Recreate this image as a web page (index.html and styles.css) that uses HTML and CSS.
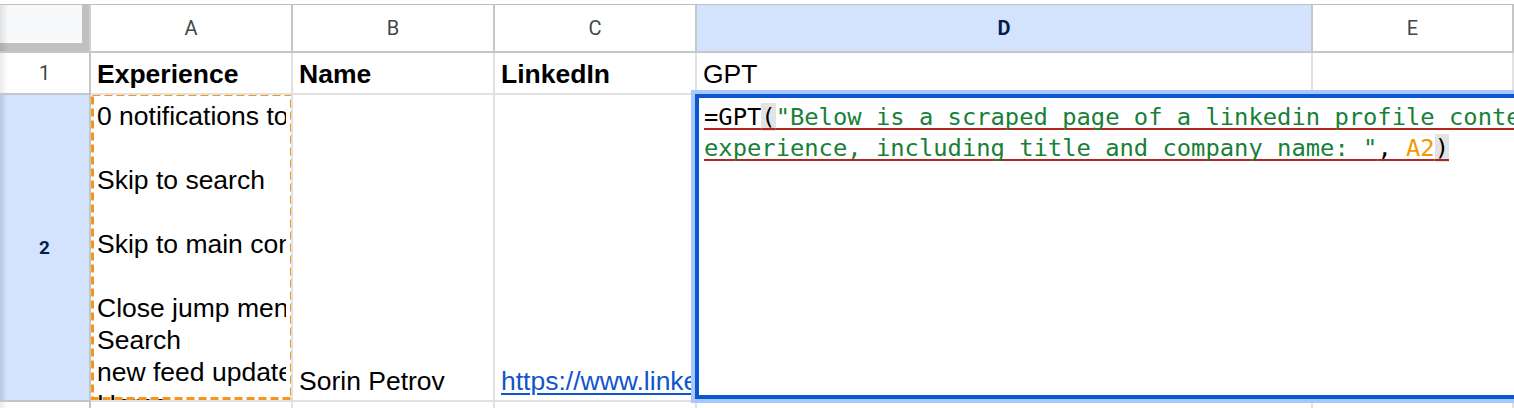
FILE: index.html
```html
<!DOCTYPE html>
<html lang="en">
<head>
<meta charset="utf-8">
<title>Sheet</title>
<link rel="stylesheet" href="styles.css">
</head>
<body>
<div class="sheet">
  <div class="strip"></div>
  <div class="grid">
    <div class="corner"><div class="corner-inner"></div></div>
    <div class="colhead">A</div>
    <div class="colhead">B</div>
    <div class="colhead">C</div>
    <div class="colhead sel">D</div>
    <div class="colhead">E</div>

    <div class="rowhead">1</div>
    <div class="cell bold">Experience</div>
    <div class="cell bold">Name</div>
    <div class="cell bold">LinkedIn</div>
    <div class="cell">GPT</div>
    <div class="cell"></div>

    <div class="rowhead sel">2</div>
    <div class="cell wrap">
      <div class="lines">
        <div>0 notifications total</div>
        <div>&nbsp;</div>
        <div>Skip to search</div>
        <div>&nbsp;</div>
        <div>Skip to main content</div>
        <div>&nbsp;</div>
        <div>Close jump menu</div>
        <div>Search</div>
        <div>new feed updates notifications</div>
        <div>Home</div>
        <div>My Network</div>
      </div>
      <svg class="marquee" width="204" height="309" viewBox="0 0 204 309">
        <rect x="2.5" y="0.5" width="199" height="304" fill="none" stroke="#f4961b" stroke-width="3" stroke-dasharray="8 4"/>
      </svg>
    </div>
    <div class="cell">Sorin Petrov</div>
    <div class="cell"><a class="link" href="#">https://www.linkedin.com/in/sorin-petrov/</a></div>
    <div class="cell editing">
      <div class="editor">
        <div class="fline"><span class="fn">=GPT</span><span class="paren">(</span><span class="str">"Below is a scraped page of a linkedin profile content. Extract the most recent </span></div>
        <div class="fline"><span class="str">experience, including title and company name: "</span><span class="fn">, </span><span class="ref">A2</span><span class="paren">)</span></div>
      </div>
    </div>
    <div class="cell"></div>

    <div class="rowhead">3</div>
    <div class="cell"></div>
    <div class="cell"></div>
    <div class="cell"></div>
    <div class="cell"></div>
    <div class="cell"></div>
  </div>
</div>
</body>
</html>
```

FILE: styles.css
```css
html, body {
  margin: 0;
  padding: 0;
  background: #fff;
}
body {
  width: 1514px;
  height: 408px;
  overflow: hidden;
  font-family: "Liberation Sans", Arial, sans-serif;
}
.sheet {
  width: 1514px;
  height: 408px;
  overflow: hidden;
  position: relative;
}
.strip {
  height: 4px;
  border-bottom: 1px solid #c0c0c0;
  background: #fff;
}
.grid {
  display: grid;
  grid-template-columns: 91px 202px 202px 202px 616px 1fr;
  grid-template-rows: 48px 42px 307px 40px;
}
.grid > div {
  box-sizing: border-box;
  border-right: 2px solid #e1e1e1;
  border-bottom: 2px solid #e1e1e1;
  min-width: 0;
}
.corner {
  background: #c0c0c0;
  border-right-color: #d0d0d0 !important;
  border-bottom-color: #c4c7c5 !important;
  background-image: linear-gradient(to right, rgba(0,0,0,0.10), rgba(0,0,0,0) 8px);
}
.corner-inner {
  width: 82px;
  height: 38px;
  background: #f8f9fa;
  background-image: linear-gradient(to right, rgba(0,0,0,0.10), rgba(0,0,0,0) 8px);
}
.colhead {
  display: flex;
  align-items: center;
  justify-content: center;
  font-family: Roboto, "Liberation Sans", Arial, sans-serif;
  font-size: 20px;
  color: #444746;
  background: #fff;
  border-right-color: #c4c7c5 !important;
  border-bottom-color: #c4c7c5 !important;
}
.colhead.sel {
  background: #d3e3fd;
  color: #041e49;
  font-weight: 700;
}
.rowhead {
  display: flex;
  align-items: center;
  justify-content: center;
  font-family: Roboto, "Liberation Sans", Arial, sans-serif;
  font-size: 20px;
  color: #444746;
  background: #fff;
  background-image: linear-gradient(to right, rgba(0,0,0,0.08), rgba(0,0,0,0) 8px);
  border-right-color: #c4c7c5 !important;
  border-bottom-color: #c4c7c5 !important;
}
.rowhead.sel {
  background-color: #d3e3fd;
  background-image: linear-gradient(to right, rgba(30,50,90,0.16), rgba(0,0,0,0) 7px);
  color: #041e49;
  font-weight: 700;
  font-size: 19px;
}
.cell {
  display: flex;
  align-items: flex-end;
  padding: 0 5px 3px 6px;
  font-size: 26.5px;
  line-height: 32px;
  color: #000;
  white-space: nowrap;
  overflow: hidden;
  background: #fff;
}
.cell.bold {
  font-weight: 700;
}
.cell.wrap {
  position: relative;
  align-items: flex-start;
  padding-top: 5px;
}
.lines {
  overflow: hidden;
  width: 100%;
}
.marquee {
  position: absolute;
  left: -1px;
  top: -1px;
}
.link {
  color: #1155cc;
  text-decoration: underline;
  text-decoration-thickness: 1.5px;
  text-underline-offset: 3px;
}
.cell.editing {
  overflow: visible;
  position: relative;
  z-index: 3;
}
.editor {
  position: absolute;
  left: -2px;
  top: -1px;
  bottom: 1px;
  width: 1000px;
  box-sizing: border-box;
  border: 4px solid #0b57d0;
  box-shadow: 0 0 0 4px #a8c7fa;
  background: #fff;
  padding: 4px 0 0 5px;
  font-family: "DejaVu Sans Mono", "Liberation Mono", monospace;
  font-size: 23.8px;
  line-height: 31px;
  overflow: hidden;
}
.fline {
  white-space: pre;
  text-decoration: underline;
  text-decoration-color: #b3261e;
  text-decoration-thickness: 2px;
  text-underline-offset: 3px;
  text-decoration-skip-ink: none;
}
.fn {
  color: #000;
}
.paren {
  color: #000;
  background: #e3e3e3;
}
.str {
  color: #188038;
}
.ref {
  color: #f29900;
}
```
